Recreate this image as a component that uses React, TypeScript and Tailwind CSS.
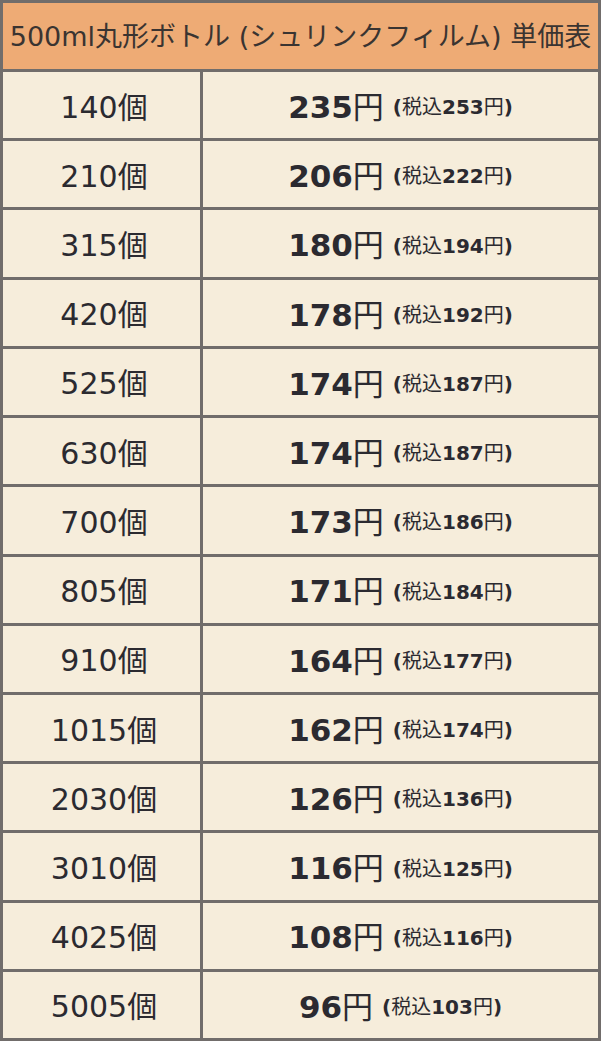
const rows = [
  { qty: '140', price: '235', tax: '253' },
  { qty: '210', price: '206', tax: '222' },
  { qty: '315', price: '180', tax: '194' },
  { qty: '420', price: '178', tax: '192' },
  { qty: '525', price: '174', tax: '187' },
  { qty: '630', price: '174', tax: '187' },
  { qty: '700', price: '173', tax: '186' },
  { qty: '805', price: '171', tax: '184' },
  { qty: '910', price: '164', tax: '177' },
  { qty: '1015', price: '162', tax: '174' },
  { qty: '2030', price: '126', tax: '136' },
  { qty: '3010', price: '116', tax: '125' },
  { qty: '4025', price: '108', tax: '116' },
  { qty: '5005', price: '96', tax: '103' },
];

export default function App() {
  return (
    <div className="w-[601px] h-[1041px] border-[3px] border-[#716d6b] bg-[#f6eddb] font-['DejaVu_Sans','Noto_Sans_CJK_JP',sans-serif] text-[#2b2a30] flex flex-col">
      <div className="h-[69px] shrink-0 border-b-[3px] border-[#716d6b] bg-[#eeab75] flex items-center justify-center pt-[3px] text-[27px] text-[#3a3431] whitespace-nowrap">
        500ml丸形ボトル (シュリンクフィルム) 単価表
      </div>
      {rows.map((r, i) => (
        <div
          key={i}
          className={`flex-1 flex pt-[4px] ${i < rows.length - 1 ? 'border-b-[3px] border-[#716d6b]' : ''}`}
        >
          <div className="w-[200px] shrink-0 border-r-[3px] border-[#716d6b] -mt-[4px] pt-[4px] flex items-center justify-center pl-[5px] text-[30px]">
            {r.qty}個
          </div>
          <div className="flex-1 flex items-center justify-center whitespace-nowrap">
            <span className="text-[31px] font-bold">{r.price}</span>
            <span className="text-[31px] font-normal">円</span>
            <span className="ml-[9px] text-[20px] font-bold">
              (<span className="font-normal">税込</span>{r.tax}<span className="font-normal">円</span>)
            </span>
          </div>
        </div>
      ))}
    </div>
  );
}
